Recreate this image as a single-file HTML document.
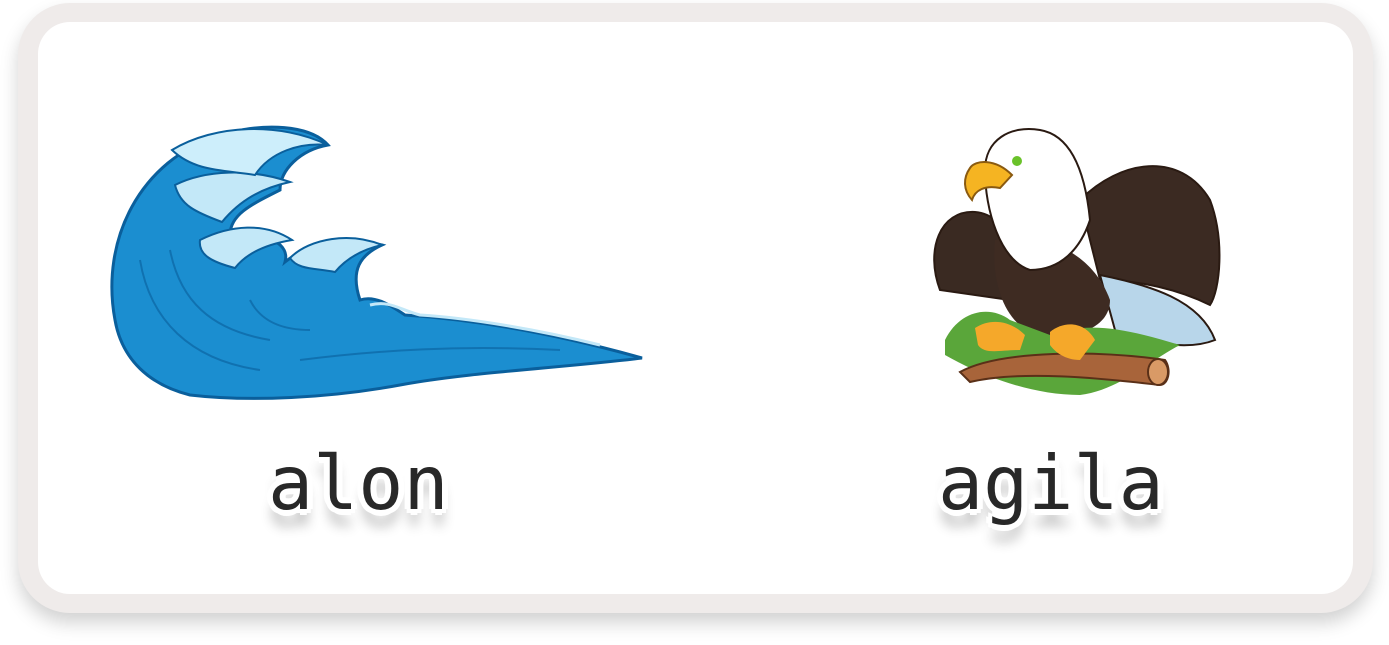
<!DOCTYPE html>
<html><head><style>
html,body{margin:0;padding:0;background:#fff;width:1389px;height:645px;overflow:hidden}
.outer{position:absolute;left:18px;top:3px;width:1355px;height:610px;background:#efebea;border-radius:52px;box-shadow:0 10px 18px rgba(0,0,0,0.18)}
.inner{position:absolute;left:38px;top:22px;width:1315px;height:572px;background:#fff;border-radius:32px}
.w{position:absolute;font-family:"DejaVu Sans Mono","Liberation Mono",monospace;font-size:75px;color:#282828;line-height:1;
 text-shadow:0 0 4px #fff,4px 4px 0 #fff,-4px -4px 0 #fff,4px -4px 0 #fff,-4px 4px 0 #fff,0 6px 0 #fff,0 -6px 0 #fff,6px 0 0 #fff,-6px 0 0 #fff,0 16px 12px rgba(0,0,0,0.3)}
</style></head><body>
<div class="outer"></div><div class="inner"></div>
<svg width="1389" height="645" style="position:absolute;left:0;top:0">
<!-- wave -->
<path d="M115 320 C100 240 140 160 220 135 C265 122 310 125 328 145 C300 150 280 170 280 190 C250 205 230 215 230 235 C270 232 290 245 285 262 C310 242 350 236 382 245 C360 255 350 270 360 300 C375 295 390 305 405 315 C480 320 560 335 642 358 C560 368 470 372 400 385 C330 398 250 402 190 395 C150 385 122 360 115 320Z" fill="#1b8ed0" stroke="#0a5f9c" stroke-width="3"/>
<path d="M175 185 C205 170 250 168 290 182 C262 188 240 200 222 222 C195 212 180 205 175 185Z" fill="#c3e8f8" stroke="#0a5f9c" stroke-width="2"/>
<path d="M200 240 C230 225 265 222 292 240 C262 245 245 255 235 268 C212 262 198 255 200 240Z" fill="#c3e8f8" stroke="#0a5f9c" stroke-width="2"/>
<path d="M290 258 C310 238 350 232 382 245 C360 250 345 260 335 272 C315 268 298 270 290 258Z" fill="#c3e8f8" stroke="#0a5f9c" stroke-width="2"/>
<path d="M172 150 C215 124 280 122 328 145 C300 142 270 152 255 175 C225 170 195 172 172 150Z" fill="#cdeefb" stroke="#0a5f9c" stroke-width="2"/>
<g fill="none" stroke="#0a5f9c" stroke-width="2" opacity="0.6">
<path d="M140 260 C150 320 190 360 260 370"/><path d="M170 250 C180 300 210 330 270 340"/><path d="M300 360 C380 350 460 345 560 350"/><path d="M250 300 C260 320 280 330 310 330"/>
</g>
<path d="M370 305 C390 300 400 310 420 315 C470 318 540 330 600 345" fill="none" stroke="#c3e8f8" stroke-width="3"/>
<!-- eagle -->
<path d="M940 290 C925 250 940 210 975 212 C1010 215 1020 260 1010 300Z" fill="#3a2a22" stroke="#2a1a12" stroke-width="2"/>
<path d="M1080 200 C1120 160 1180 150 1210 200 C1225 240 1220 290 1210 305 C1180 290 1140 280 1100 280Z" fill="#3b2a22" stroke="#2a1a12" stroke-width="2"/>
<path d="M1100 275 C1150 285 1200 300 1215 340 C1190 350 1150 345 1115 330Z" fill="#b8d6ea" stroke="#2a1a12" stroke-width="2"/>
<path d="M995 240 C1030 230 1090 245 1110 300 C1110 330 1070 340 1040 335 C1010 330 990 290 995 240Z" fill="#3e2b22"/>
<path d="M985 170 C985 140 1010 125 1040 130 C1070 135 1085 170 1090 220 C1080 250 1060 270 1030 270 C1000 260 985 210 985 170Z" fill="#fff" stroke="#2a1a12" stroke-width="2"/>
<path d="M970 168 C975 160 995 158 1012 175 L1000 188 C985 185 975 190 972 200 C963 190 963 178 970 168Z" fill="#f5b422" stroke="#8a5a10" stroke-width="2"/>
<circle cx="1017" cy="161" r="5" fill="#6ac22a"/>
<path d="M945 340 C960 310 990 305 1010 320 L1050 335 C1090 320 1130 330 1180 345 C1150 360 1120 390 1080 395 C1030 395 980 375 945 355Z" fill="#5aa63a"/>
<path d="M960 372 C1000 350 1100 350 1165 360 C1172 370 1168 385 1160 385 C1100 378 1020 370 970 382Z" fill="#a8643a" stroke="#5a3018" stroke-width="2"/>
<ellipse cx="1158" cy="372" rx="10" ry="13" fill="#d99a66" stroke="#5a3018" stroke-width="2"/>
<path d="M975 328 C990 318 1010 320 1025 335 L1020 350 C1000 350 985 355 978 345Z" fill="#f5a82a"/>
<path d="M1050 332 C1065 320 1085 322 1095 340 L1080 360 C1065 360 1055 352 1050 345Z" fill="#f5a82a"/>
</svg>
<div class="w" style="left:268px;top:446px">alon</div>
<div class="w" style="left:938px;top:446px">agila</div>
</body></html>
